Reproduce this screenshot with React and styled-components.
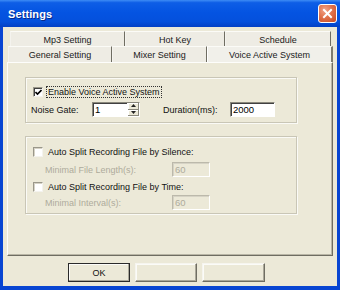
import React from 'react'
import styled, { createGlobalStyle } from 'styled-components'

const GlobalStyle = createGlobalStyle`
  html, body {
    margin: 0;
    padding: 0;
    background: #ece9d8;
  }
  body {
    font-family: "Liberation Sans", Arial, sans-serif;
  }
`

const Frame = styled.div`
  width: 340px;
  height: 290px;
  display: flex;
  flex-direction: column;
  background: #ece9d8;
  overflow: hidden;
`

const TitleBar = styled.div`
  height: 27px;
  flex: none;
  display: flex;
  align-items: center;
  justify-content: space-between;
  padding: 0 3px 0 8px;
  background: linear-gradient(#3d8cf5 0%, #0e5ee6 10%, #0454e2 45%, #0450dc 80%, #0340c4 100%);
`

const Title = styled.span`
  color: #fff;
  font-size: 11px;
  font-weight: 700;
  letter-spacing: 0.1px;
  text-shadow: 1px 1px 0 #0a2a8a;
`

const CloseButton = styled.div`
  width: 19px;
  height: 19px;
  box-sizing: border-box;
  border: 1px solid #fff;
  border-radius: 3px;
  background: radial-gradient(circle at 35% 30%, #f2a58a 0%, #e0724c 45%, #c94a22 100%);
  display: flex;
  align-items: center;
  justify-content: center;
`

const Body = styled.div`
  flex: 1;
  display: flex;
  flex-direction: column;
  border-left: 3px solid #0845d2;
  border-right: 3px solid #0845d2;
  border-bottom: 4px solid #0845d2;
  padding: 4px 4px 0 4px;
`

const TabRow = styled.div`
  display: flex;
  height: ${p => p.$h}px;
  margin-left: ${p => p.$indent}px;
  align-items: stretch;
`

const Tab = styled.div`
  box-sizing: border-box;
  width: ${p => p.$w}px;
  display: flex;
  align-items: center;
  justify-content: center;
  padding-top: ${p => p.$pt || 0}px;
  font-size: 9px;
  color: #1a1a1a;
  background: ${p => (p.$active ? '#f1f0ea' : '#eeece4')};
  border-top: 1px solid #fbfbf7;
  border-left: 1px solid ${p => (p.$active ? '#ffffff' : '#f4f3ee')};
  border-right: ${p => (p.$active ? '2px solid #7d7b6e' : '1px solid #6f6d62')};
  margin-bottom: ${p => (p.$active ? '-1px' : '0')};
`

const Panel = styled.div`
  height: 194px;
  box-sizing: border-box;
  display: flex;
  flex-direction: column;
  gap: 13px;
  padding: 14px 0 0 17px;
  background: #ece9d8;
  border-top: 1px solid #fdfdfb;
  border-left: 1px solid #fdfdfb;
  border-right: 1px solid #6f6d62;
  border-bottom: 1px solid #6f6d62;
  box-shadow: inset -1px -1px 0 #b9b6a6;
`

const GroupBox = styled.div`
  width: 272px;
  box-sizing: border-box;
  display: flex;
  flex-direction: column;
  padding: ${p => p.$pad};
  border: 1px solid #c9c6b6;
  box-shadow: 1px 1px 0 #fafaf6, inset 1px 1px 0 #fafaf6;
`

const CheckRow = styled.div`
  display: flex;
  align-items: center;
  height: 12px;
  margin-left: 2px;
  margin-top: ${p => p.$mt || 0}px;
`

const CheckBox = styled.span`
  width: 10px;
  height: 10px;
  box-sizing: border-box;
  flex: none;
  background: #fff;
  border-top: 1px solid #9a978a;
  border-left: 1px solid #9a978a;
  border-right: 1px solid #f4f3ee;
  border-bottom: 1px solid #f4f3ee;
  box-shadow: inset 1px 1px 0 ${p => (p.$dark ? '#404040' : '#d6d3c6')};
  display: flex;
  align-items: center;
  justify-content: center;
`

const CheckLabel = styled.span`
  margin-left: 3px;
  padding: 0 1px;
  height: 12px;
  box-sizing: border-box;
  display: flex;
  align-items: center;
  font-size: 9px;
  color: #111;
  border: 1px dotted ${p => (p.$focused ? '#333' : 'transparent')};
`

const FieldRow = styled.div`
  display: flex;
  align-items: center;
  height: 15px;
  padding-left: ${p => p.$indent || 0}px;
  margin-top: ${p => p.$mt || 0}px;
`

const Label = styled.span`
  width: ${p => p.$w}px;
  margin-left: ${p => p.$ml || 0}px;
  flex: none;
  font-size: 9px;
  color: ${p => (p.$disabled ? '#aeab9c' : '#111')};
`

const Field = styled.div`
  width: ${p => p.$w}px;
  height: 15px;
  box-sizing: border-box;
  display: flex;
  align-items: center;
  justify-content: space-between;
  padding-left: 2px;
  font-size: 9.5px;
  color: ${p => (p.$disabled ? '#aeab9c' : '#000')};
  background: ${p => (p.$disabled ? '#ece9d8' : '#fff')};
  border-top: 1px solid ${p => (p.$disabled ? '#bcb9ab' : '#8a887c')};
  border-left: 1px solid ${p => (p.$disabled ? '#bcb9ab' : '#8a887c')};
  border-right: 1px solid #fff;
  border-bottom: 1px solid #fff;
  box-shadow: inset 1px 1px 0 ${p => (p.$disabled ? '#d6d3c5' : '#404040')};
`

const Spin = styled.div`
  width: 11px;
  height: 13px;
  flex: none;
  display: flex;
  flex-direction: column;
  border-left: 1px solid #fff;
`

const SpinHalf = styled.div`
  flex: 1;
  display: flex;
  align-items: center;
  justify-content: center;
  background: #ece9d8;
  border-right: 1px solid #8a887c;
  border-bottom: 1px solid #8a887c;
  box-shadow: inset 1px 1px 0 #fff;
`

const ButtonRow = styled.div`
  display: flex;
  gap: 5px;
  margin-top: 7px;
  padding-left: 61px;
`

const Button = styled.div`
  width: ${p => p.$w || 62}px;
  height: 19px;
  box-sizing: border-box;
  display: flex;
  align-items: center;
  justify-content: center;
  font-size: 9px;
  color: #111;
  background: #ece9d8;
  border: 1px solid ${p => (p.$default ? '#2a2a2a' : '#f6f5ef')};
  border-right-color: ${p => (p.$default ? '#2a2a2a' : '#6f6d62')};
  border-bottom-color: ${p => (p.$default ? '#2a2a2a' : '#6f6d62')};
  box-shadow: inset -1px -1px 0 #aaa799, inset 1px 1px 0 #fbfbf8;
`

const Tick = () => (
  <svg width="7" height="7" viewBox="0 0 7 7">
    <path d="M0.5 3 L2.5 5 L6.5 1" fill="none" stroke="#000" strokeWidth="1.6" />
  </svg>
)

const Arrow = ({ up }) => (
  <svg width="5" height="3" viewBox="0 0 5 3">
    <path d={up ? 'M0 3 L2.5 0 L5 3 Z' : 'M0 0 L2.5 3 L5 0 Z'} fill="#222" />
  </svg>
)

const App = () => (
  <>
    <GlobalStyle />
    <Frame>
      <TitleBar>
        <Title>Settings</Title>
        <CloseButton>
          <svg width="11" height="11" viewBox="0 0 11 11">
            <path d="M2 2 L9 9 M9 2 L2 9" stroke="#fff" strokeWidth="2" strokeLinecap="square" />
          </svg>
        </CloseButton>
      </TitleBar>
      <Body>
        <TabRow $h={15} $indent={3}>
          <Tab $w={115} $pt={2}>Mp3 Setting</Tab>
          <Tab $w={100} $pt={2}>Hot Key</Tab>
          <Tab $w={106} $pt={2}>Schedule</Tab>
        </TabRow>
        <TabRow $h={16} $indent={1}>
          <Tab $w={104}>General Setting</Tab>
          <Tab $w={95}>Mixer Setting</Tab>
          <Tab $w={126} $active>Voice Active System</Tab>
        </TabRow>
        <Panel>
          <GroupBox $pad="8px 0 5px 5px">
            <CheckRow>
              <CheckBox $dark><Tick /></CheckBox>
              <CheckLabel $focused>Enable Voice Active System</CheckLabel>
            </CheckRow>
            <FieldRow $mt={4}>
              <Label $w={61}>Noise Gate:</Label>
              <Field $w={48}>
                <span>1</span>
                <Spin>
                  <SpinHalf><Arrow up /></SpinHalf>
                  <SpinHalf><Arrow /></SpinHalf>
                </Spin>
              </Field>
              <Label $w={67} $ml={23}>Duration(ms):</Label>
              <Field $w={45}>2000</Field>
            </FieldRow>
          </GroupBox>
          <GroupBox $pad="9px 0 3px 5px">
            <CheckRow>
              <CheckBox />
              <CheckLabel>Auto Split Recording File by Silence:</CheckLabel>
            </CheckRow>
            <FieldRow $indent={14} $mt={4}>
              <Label $w={127} $disabled>Minimal File Length(s):</Label>
              <Field $w={38} $disabled>60</Field>
            </FieldRow>
            <CheckRow $mt={4}>
              <CheckBox />
              <CheckLabel>Auto Split Recording File by Time:</CheckLabel>
            </CheckRow>
            <FieldRow $indent={14} $mt={2}>
              <Label $w={127} $disabled>Minimal Interval(s):</Label>
              <Field $w={38} $disabled>60</Field>
            </FieldRow>
          </GroupBox>
        </Panel>
        <ButtonRow>
          <Button $default>OK</Button>
          <Button />
          <Button $w={63} />
        </ButtonRow>
      </Body>
    </Frame>
  </>
)

export default App
